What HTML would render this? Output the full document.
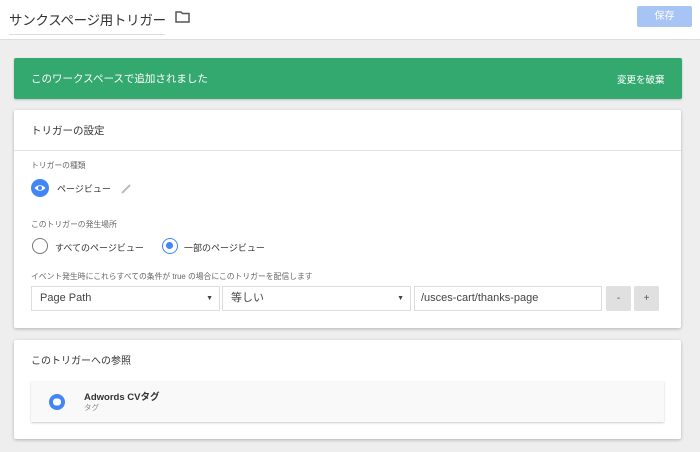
<!DOCTYPE html>
<html><head><meta charset="utf-8"><style>
*{box-sizing:border-box;margin:0;padding:0}
body{width:700px;height:452px;overflow:hidden;background:#eeeeee;font-family:"Liberation Sans","Noto Sans CJK JP",sans-serif;color:#333;position:relative}
.abs{position:absolute;white-space:nowrap}
.hdr{left:0;top:0;width:700px;height:40px;background:#fff;border-bottom:1px solid #ddd}
.title{left:9px;top:9px;font-size:13.5px;color:#333;border-bottom:1px solid #ddd;padding-bottom:5px;width:156px;letter-spacing:-0.3px}
.save{left:637px;top:6px;width:55px;height:21px;background:#a8c4f5;color:#fff;font-size:10px;text-align:center;line-height:21px;border-radius:2px}
.green{left:14px;top:58px;width:668px;height:41px;background:#34a96f;border-radius:2px;box-shadow:0 1px 2px rgba(0,0,0,.2);color:#fff;font-size:10.5px}
.card{background:#fff;box-shadow:0 1px 3px rgba(0,0,0,.25);border-radius:2px}
.sm{font-size:7.8px;color:#666}
.sel{height:25px;border:1px solid #ddd;background:#fff;font-size:11px;line-height:23px;padding-left:8px;color:#444}
.btn{width:25px;height:25px;background:#e0e0e0;border-radius:2px;font-size:10px;text-align:center;line-height:25px;color:#555}
</style></head><body>
<div class="abs hdr"></div>
<div class="abs title">サンクスページ用トリガー</div>
<svg class="abs" style="left:175px;top:11px" width="15" height="12" viewBox="0 0 15 12"><path d="M1 1h5l1.5 1.5H14V11H1z" fill="none" stroke="#555" stroke-width="1.5"/></svg>
<div class="abs save">保存</div>
<div class="abs green"><span class="abs" style="left:17px;top:13px">このワークスペースで追加されました</span><span class="abs" style="left:603px;top:14px;font-size:9.5px">変更を破棄</span></div>
<div class="abs card" style="left:14px;top:110px;width:667px;height:218px"></div>
<div class="abs" style="left:14px;top:150px;width:667px;height:1px;background:#e4e4e4"></div>
<div class="abs" style="left:31px;top:123px;font-size:10.5px">トリガーの設定</div>
<div class="abs sm" style="left:31px;top:160px">トリガーの種類</div>
<svg class="abs" style="left:31px;top:179px" width="18" height="18" viewBox="0 0 18 18"><circle cx="9" cy="9" r="9" fill="#4285f4"/><path d="M3.5 9Q9 3.5 14.5 9Q9 14.5 3.5 9z" fill="#fff"/><circle cx="9" cy="9" r="2" fill="#4285f4"/></svg>
<div class="abs" style="left:57px;top:182px;font-size:9px">ページビュー</div>
<svg class="abs" style="left:121px;top:184px" width="10" height="10"><path d="M1 9L9 1" stroke="#bbb" stroke-width="2"/></svg>
<div class="abs sm" style="left:31px;top:219px">このトリガーの発生場所</div>
<div class="abs" style="left:32px;top:238px;width:16px;height:16px;border:1.5px solid #777;border-radius:50%"></div>
<div class="abs" style="left:55px;top:241px;font-size:9px">すべてのページビュー</div>
<div class="abs" style="left:162px;top:238px;width:16px;height:16px;border:1.5px solid #4285f4;border-radius:50%"><div style="margin:3px;width:7px;height:7px;border-radius:50%;background:#4285f4"></div></div>
<div class="abs" style="left:184px;top:241px;font-size:9px">一部のページビュー</div>
<div class="abs sm" style="left:31px;top:271px">イベント発生時にこれらすべての条件が true の場合にこのトリガーを配信します</div>
<div class="abs sel" style="left:31px;top:286px;width:189px">Page Path<span style="position:absolute;right:6px;font-size:7px">▼</span></div>
<div class="abs sel" style="left:222px;top:286px;width:189px">等しい<span style="position:absolute;right:6px;font-size:7px">▼</span></div>
<div class="abs sel" style="left:414px;top:286px;width:188px;padding-left:6px">/usces-cart/thanks-page</div>
<div class="abs btn" style="left:606px;top:286px">-</div>
<div class="abs btn" style="left:634px;top:286px">+</div>
<div class="abs card" style="left:14px;top:340px;width:667px;height:99px"></div>
<div class="abs" style="left:31px;top:352px;font-size:10px">このトリガーへの参照</div>
<div class="abs" style="left:31px;top:381px;width:633px;height:41px;background:#f9f9f9;box-shadow:0 1px 2px rgba(0,0,0,.2)"></div>
<svg class="abs" style="left:48px;top:393px" width="18" height="18"><circle cx="9" cy="9" r="8" fill="#4285f4"/><rect x="5" y="5.5" width="8" height="7" rx="3" fill="#fff"/></svg>
<div class="abs" style="left:84px;top:389px;font-size:9.5px;font-weight:bold;color:#333">Adwords CVタグ</div>
<div class="abs" style="left:84px;top:402px;font-size:7.5px;color:#888">タグ</div>
</body></html>
